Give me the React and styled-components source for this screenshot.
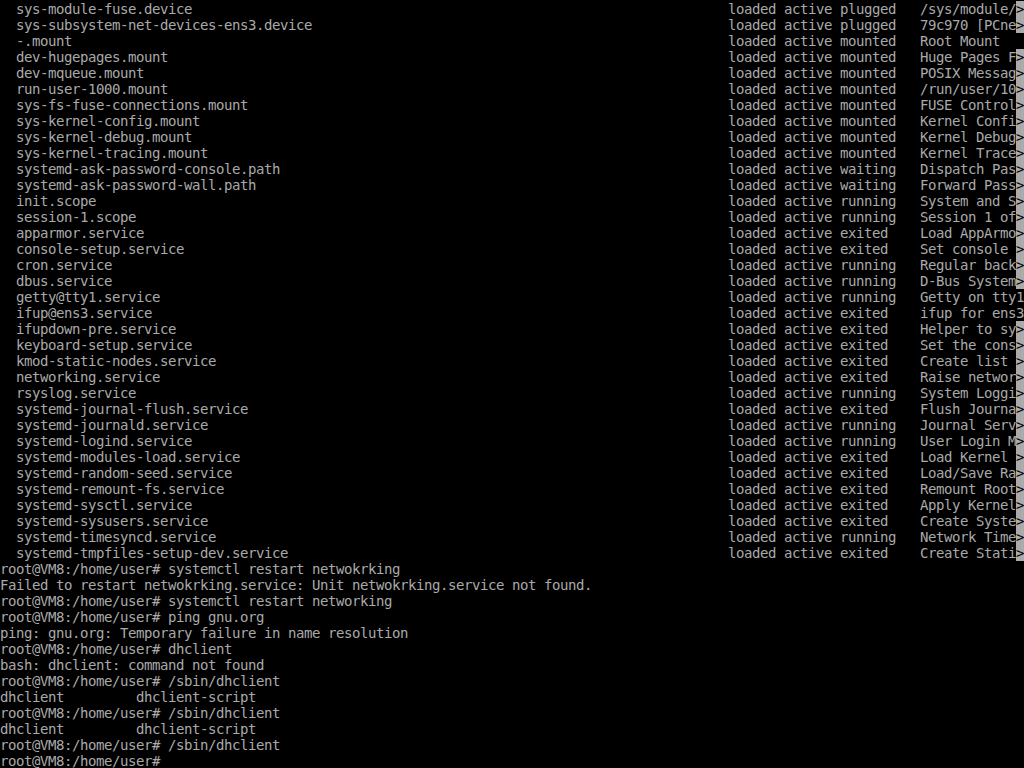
import * as React from 'react'
import styled, { createGlobalStyle } from 'styled-components'

const Global = createGlobalStyle`
  html, body {
    margin: 0;
    padding: 0;
    background: #000;
  }
`

const Screen = styled('main')`
  box-sizing: border-box;
  width: 1024px;
  height: 768px;
  padding-top: 1px;
  overflow: hidden;
  background: #000;
  color: #aaaaaa;
  font-family: "DejaVu Sans Mono", "Liberation Mono", monospace;
  font-size: 14px;
  letter-spacing: -0.43px;
  line-height: 16px;
  display: flex;
  flex-direction: column;
`

const UnitRow = styled('div')`
  display: grid;
  grid-template-columns: 16px 712px 56px 56px 80px 96px 8px;
  flex: 0 0 16px;
  white-space: pre;
`

const Cell = styled('span')`
  overflow: hidden;
`

const More = styled('span')`
  background: ${(p) => (p.$on ? '#aaaaaa' : 'transparent')};
  color: #000;
`

const Line = styled('div')`
  flex: 0 0 16px;
  white-space: pre;
`

const units = [
  ['sys-module-fuse.device', 'plugged', '/sys/module/', true],
  ['sys-subsystem-net-devices-ens3.device', 'plugged', '79c970 [PCne', true],
  ['-.mount', 'mounted', 'Root Mount', false],
  ['dev-hugepages.mount', 'mounted', 'Huge Pages F', true],
  ['dev-mqueue.mount', 'mounted', 'POSIX Messag', true],
  ['run-user-1000.mount', 'mounted', '/run/user/10', true],
  ['sys-fs-fuse-connections.mount', 'mounted', 'FUSE Control', true],
  ['sys-kernel-config.mount', 'mounted', 'Kernel Confi', true],
  ['sys-kernel-debug.mount', 'mounted', 'Kernel Debug', true],
  ['sys-kernel-tracing.mount', 'mounted', 'Kernel Trace', true],
  ['systemd-ask-password-console.path', 'waiting', 'Dispatch Pas', true],
  ['systemd-ask-password-wall.path', 'waiting', 'Forward Pass', true],
  ['init.scope', 'running', 'System and S', true],
  ['session-1.scope', 'running', 'Session 1 of', true],
  ['apparmor.service', 'exited', 'Load AppArmo', true],
  ['console-setup.service', 'exited', 'Set console ', true],
  ['cron.service', 'running', 'Regular back', true],
  ['dbus.service', 'running', 'D-Bus System', true],
  ['getty@tty1.service', 'running', 'Getty on tty1', false],
  ['ifup@ens3.service', 'exited', 'ifup for ens3', false],
  ['ifupdown-pre.service', 'exited', 'Helper to sy', true],
  ['keyboard-setup.service', 'exited', 'Set the cons', true],
  ['kmod-static-nodes.service', 'exited', 'Create list ', true],
  ['networking.service', 'exited', 'Raise networ', true],
  ['rsyslog.service', 'running', 'System Loggi', true],
  ['systemd-journal-flush.service', 'exited', 'Flush Journa', true],
  ['systemd-journald.service', 'running', 'Journal Serv', true],
  ['systemd-logind.service', 'running', 'User Login M', true],
  ['systemd-modules-load.service', 'exited', 'Load Kernel ', true],
  ['systemd-random-seed.service', 'exited', 'Load/Save Ra', true],
  ['systemd-remount-fs.service', 'exited', 'Remount Root', true],
  ['systemd-sysctl.service', 'exited', 'Apply Kernel', true],
  ['systemd-sysusers.service', 'exited', 'Create Syste', true],
  ['systemd-timesyncd.service', 'running', 'Network Time', true],
  ['systemd-tmpfiles-setup-dev.service', 'exited', 'Create Stati', true],
]

const shell = [
  'root@VM8:/home/user# systemctl restart netwokrking',
  'Failed to restart netwokrking.service: Unit netwokrking.service not found.',
  'root@VM8:/home/user# systemctl restart networking',
  'root@VM8:/home/user# ping gnu.org',
  'ping: gnu.org: Temporary failure in name resolution',
  'root@VM8:/home/user# dhclient',
  'bash: dhclient: command not found',
  'root@VM8:/home/user# /sbin/dhclient',
  'dhclient         dhclient-script',
  'root@VM8:/home/user# /sbin/dhclient',
  'dhclient         dhclient-script',
  'root@VM8:/home/user# /sbin/dhclient',
  'root@VM8:/home/user#',
]

export default function App() {
  return (
    <Screen>
      <Global />
      {units.map(([name, sub, desc, cut]) => {
        const text = cut ? desc : desc.slice(0, 12)
        const last = cut ? '>' : desc.slice(12)
        return (
          <UnitRow key={name}>
            <Cell />
            <Cell>{name}</Cell>
            <Cell>loaded</Cell>
            <Cell>active</Cell>
            <Cell>{sub}</Cell>
            <Cell>{text}</Cell>
            {cut ? <More $on>{last}</More> : <Cell>{last}</Cell>}
          </UnitRow>
        )
      })}
      {shell.map((l, i) => (
        <Line key={i}>{l}</Line>
      ))}
    </Screen>
  )
}
